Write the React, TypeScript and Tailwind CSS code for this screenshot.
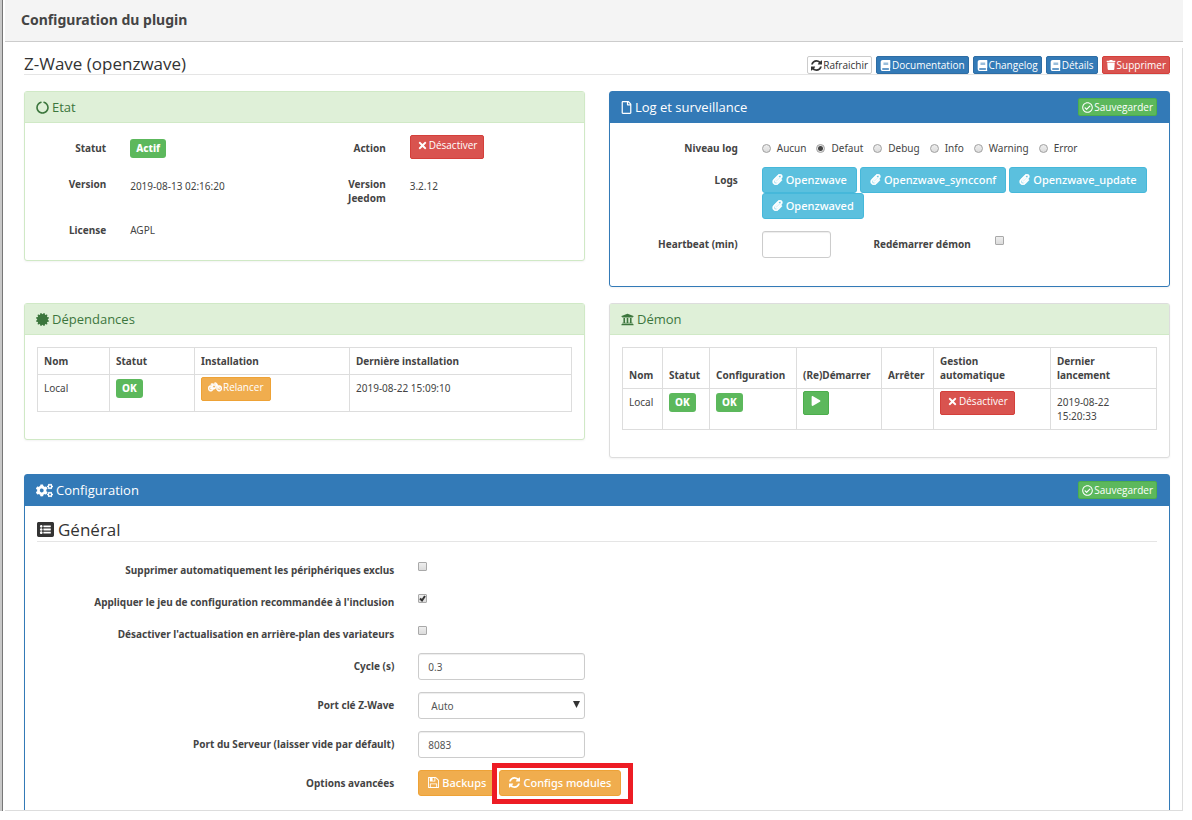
import type { ReactNode } from "react";
import {
  FaBicycle,
  FaBook,
  FaCertificate,
  FaCircleNotch,
  FaCogs,
  FaListAlt,
  FaPaperclip,
  FaPlay,
  FaRegCheckCircle,
  FaRegFile,
  FaTimes,
  FaTrash,
  FaUniversity,
} from "react-icons/fa";

function RefreshIcon({ className }: { className?: string }) {
  return (
    <svg viewBox="128 128 1536 1536" fill="currentColor" className={className} aria-hidden="true">
      <path d="M1639 1056q0 5-1 7-64 268-268 434.5t-478 166.5q-146 0-282.5-55t-243.5-157l-129 129q-19 19-45 19t-45-19-19-45v-448q0-26 19-45t45-19h448q26 0 45 19t19 45-19 45l-137 137q71 66 161 102t187 36q134 0 250-65t186-179q11-17 53-117 8-23 30-23h192q13 0 22.5 9.5t9.5 22.5zm25-800v448q0 26-19 45t-45 19h-448q-26 0-45-19t-19-45 19-45l138-138q-148-137-349-137-134 0-250 65t-186 179q-11 17-53 117-8 23-30 23h-199q-13 0-22.5-9.5t-9.5-22.5v-7q65-268 270-434.5t480-166.5q146 0 284 55.5t245 156.5l130-129q19-19 45-19t45 19 19 45z" />
    </svg>
  );
}

function SaveIcon({ className }: { className?: string }) {
  return (
    <svg viewBox="128 128 1536 1536" fill="currentColor" className={className} aria-hidden="true">
      <path d="M512 1536h768v-384h-768v384zm896 0h128v-896q0-14-10-38.5t-20-34.5l-281-281q-10-10-34-20t-39-10v416q0 40-28 68t-68 28h-576q-40 0-68-28t-28-68v-416h-128v1280h128v-416q0-40 28-68t68-28h832q40 0 68 28t28 68v416zm-384-928v-320q0-13-9.5-22.5t-22.5-9.5h-192q-13 0-22.500 9.500t-9.500 22.500v320q0 13 9.500 22.500t22.500 9.500h192q13 0 22.500-9.500t9.500-22.500zm640 32v928q0 40-28 68t-68 28h-1344q-40 0-68-28t-28-68v-1344q0-40 28-68t68-28h928q40 0 88 20t76 48l280 280q28 28 48 76t20 88z" />
    </svg>
  );
}

const colors = {
  default: "bg-white border-[#ccc] text-[#333]",
  primary: "bg-[#337ab7] border-[#2e6da4] text-white",
  success: "bg-[#5cb85c] border-[#4cae4c] text-white",
  info: "bg-[#5bc0de] border-[#46b8da] text-white",
  warning: "bg-[#f0ad4e] border-[#eea236] text-white",
  danger: "bg-[#d9534f] border-[#d43f3a] text-white",
};

const sizes = {
  xs: "h-[18px] gap-px px-[3px] font-['Open_Sans',sans-serif] text-[10px] rounded-[2px]",
  sm: "h-6 gap-px px-1.5 pb-1 font-['Open_Sans',sans-serif] text-[10px] rounded-[2px]",
  md: "h-[26px] gap-[3px] px-[9px] pb-px text-[11px] rounded-[3px]",
};

interface ButtonProps {
  color: keyof typeof colors;
  size?: keyof typeof sizes;
  label?: string;
  children?: ReactNode;
}

function Button({ color, size = "md", label, children }: ButtonProps) {
  return (
    <button
      type="button"
      aria-label={label}
      className={`inline-flex items-center justify-center whitespace-nowrap border leading-none font-medium ${sizes[size]} ${colors[color]}`}
    >
      {children}
    </button>
  );
}

function Badge({ children }: { children: ReactNode }) {
  return (
    <span className="inline-block h-[19px] rounded-[3px] bg-[#5cb85c] px-1.5 text-[10px] leading-[19px] font-extrabold text-white">
      {children}
    </span>
  );
}

interface PanelProps {
  variant: "success" | "primary";
  border: string;
  icon: ReactNode;
  title: string;
  action?: ReactNode;
  className?: string;
  children: ReactNode;
}

function Panel({ variant, border, icon, title, action, className = "", children }: PanelProps) {
  const heading =
    variant === "success"
      ? "bg-[#dff0d8] text-[#3c763d] border-[#d0e9c6]"
      : "bg-[#337ab7] text-white border-[#337ab7]";
  return (
    <section className={`rounded-[3px] border bg-white shadow-xs ${border} ${className}`}>
      <div className={`flex h-[31px] items-center justify-between border-b pr-3 pl-[11px] ${heading}`}>
        <h2 className="flex items-center gap-[3px] font-['Open_Sans',sans-serif] text-[13px]">
          {icon}
          {title}
        </h2>
        {action}
      </div>
      {children}
    </section>
  );
}

function Label({ htmlFor, className = "", children }: { htmlFor?: string; className?: string; children: ReactNode }) {
  return (
    <label htmlFor={htmlFor} className={`px-3 pt-1.5 text-right font-bold ${className}`}>
      {children}
    </label>
  );
}

function Checkbox({ id, checked = false }: { id: string; checked?: boolean }) {
  return (
    <div className="mt-[5px] grid size-[9px]">
      <input
        id={id}
        type="checkbox"
        defaultChecked={checked}
        className="peer col-start-1 row-start-1 size-[9px] appearance-none rounded-[1px] border border-[#a9a9a9] bg-linear-to-b from-[#eee] to-[#dcdcdc]"
      />
      <svg
        viewBox="0 0 9 9"
        className="pointer-events-none invisible col-start-1 row-start-1 size-[9px] fill-none stroke-[#333] stroke-2 peer-checked:visible"
      >
        <path d="M2 4.5 4 6.5 7 2" />
      </svg>
    </div>
  );
}

function SaveButton() {
  return (
    <Button color="success" size="xs">
      <FaRegCheckCircle className="size-[11px]" />
      Sauvegarder
    </Button>
  );
}

const inputClass =
  "block h-[27px] w-full rounded-[3px] border border-[#ccc] bg-white px-[9px] text-[10px] text-[#555] shadow-[inset_0_1px_1px_rgba(0,0,0,0.075)]";
const th = "border border-[#ddd] px-1.5 py-1.5 text-left align-bottom font-bold";
const td = "border border-[#ddd] px-1.5 align-top";

const levels = ["Aucun", "Defaut", "Debug", "Info", "Warning", "Error"];
const logs = ["Openzwave", "Openzwave_syncconf", "Openzwave_update", "Openzwaved"];

export default function App() {
  return (
    <div className="flex h-screen bg-white pr-[9px] pb-[9px] font-['Noto_Sans','Open_Sans',sans-serif] text-[10px] leading-[14px] text-[#444]">
      <div className="mr-0.5 w-[3px] shrink-0 border-r border-[#777] bg-[#c8c8c8]" />
      <div className="flex min-w-0 flex-1 flex-col border-b border-[#ddd]">
        <header className="flex h-[42px] shrink-0 items-center border-b border-[#ccc] bg-[#f4f4f4] px-4 pb-0.5">
          <h1 className="text-[14px] leading-5 font-bold">Configuration du plugin</h1>
        </header>

        <main className="mt-1.5 min-h-0 flex-1 overflow-hidden border-r border-[#ddd] pr-3 pl-[19px]">
          <div className="flex h-[27px] items-end justify-between border-b border-[#e5e5e5]">
            <h2 className="font-['Open_Sans',sans-serif] text-[17px] leading-[21px] text-[#333]">Z-Wave (openzwave)</h2>
            <div className="flex gap-1">
              <Button color="default" size="xs">
                <RefreshIcon className="size-[11px]" />
                Rafraichir
              </Button>
              <Button color="primary" size="xs">
                <FaBook className="size-[11px]" />
                Documentation
              </Button>
              <Button color="primary" size="xs">
                <FaBook className="size-[11px]" />
                Changelog
              </Button>
              <Button color="primary" size="xs">
                <FaBook className="size-[11px]" />
                Détails
              </Button>
              <Button color="danger" size="xs">
                <FaTrash className="size-[10px]" />
                Supprimer
              </Button>
            </div>
          </div>

          <div className="mt-4 grid grid-cols-2 items-start gap-x-6 gap-y-4">
            <Panel variant="success" border="border-[#d0e9c6]" icon={<FaCircleNotch className="size-[13px]" />} title="Etat">
              <div className="grid grid-cols-12 gap-y-3 pt-3 pb-[23px]">
                <Label className="col-span-2">Statut</Label>
                <div className="col-span-4 px-3 pt-1">
                  <Badge>Actif</Badge>
                </div>
                <Label className="col-span-2">Action</Label>
                <div className="col-span-4 h-6 px-3">
                  <Button color="danger" size="sm">
                    <FaTimes className="size-[11px]" />
                    Désactiver
                  </Button>
                </div>
                <Label className="col-span-2">Version</Label>
                <span className="col-span-4 px-3 pt-2">2019-08-13 02:16:20</span>
                <Label className="col-span-2">Version Jeedom</Label>
                <span className="col-span-4 px-3 pt-2">3.2.12</span>
                <Label className="col-span-2">License</Label>
                <span className="col-span-4 px-3 pt-1.5">AGPL</span>
              </div>
            </Panel>

            <Panel
              variant="primary"
              border="border-[#337ab7]"
              icon={<FaRegFile className="h-[13px] w-[11px]" />}
              title="Log et surveillance"
              action={<SaveButton />}
            >
              <div className="grid grid-cols-12 gap-y-3 pt-3 pb-7">
                <Label className="col-span-3">Niveau log</Label>
                <div className="col-span-9 flex gap-2.5 px-3 pt-1.5">
                  {levels.map((level) => (
                    <label key={level} className="flex items-center gap-1.5">
                      <input
                        type="radio"
                        name="level"
                        defaultChecked={level === "Defaut"}
                        className="size-[9px] appearance-none rounded-full border border-[#a0a0a0] bg-linear-to-b from-[#eee] to-[#dcdcdc] checked:bg-[radial-gradient(circle,#444_2px,#e4e4e4_3px)]"
                      />
                      {level}
                    </label>
                  ))}
                </div>
                <Label className="col-span-3">Logs</Label>
                <div className="col-span-9 flex flex-wrap gap-x-[3px] px-3">
                  {logs.map((log) => (
                    <Button key={log} color="info">
                      <FaPaperclip className="size-[11px] stroke-current stroke-[30]" />
                      {log}
                    </Button>
                  ))}
                </div>
                <Label htmlFor="heartbeat" className="col-span-3">
                  Heartbeat (min)
                </Label>
                <div className="col-span-2 px-3">
                  <input id="heartbeat" type="text" className={inputClass} />
                </div>
                <Label htmlFor="restart" className="col-span-3">
                  Redémarrer démon
                </Label>
                <div className="col-span-4 px-3">
                  <Checkbox id="restart" />
                </div>
              </div>
            </Panel>

            <Panel
              variant="success"
              border="border-[#d0e9c6]"
              icon={<FaCertificate className="size-[13px]" />}
              title="Dépendances"
            >
              <div className="px-3 pt-3 pb-[27px]">
                <table className="w-full border-collapse">
                  <thead>
                    <tr>
                      <th className={`${th} w-[72px]`}>Nom</th>
                      <th className={`${th} w-[85px]`}>Statut</th>
                      <th className={`${th} w-[155px]`}>Installation</th>
                      <th className={th}>Dernière installation</th>
                    </tr>
                  </thead>
                  <tbody>
                    <tr className="h-[37px]">
                      <td className={`${td} pt-1.5`}>Local</td>
                      <td className={`${td} pt-1`}>
                        <Badge>OK</Badge>
                      </td>
                      <td className={`${td} pt-0.5`}>
                        <Button color="warning" size="sm">
                          <FaBicycle className="size-[14px] stroke-current stroke-[30]" />
                          Relancer
                        </Button>
                      </td>
                      <td className={`${td} pt-1.5`}>2019-08-22 15:09:10</td>
                    </tr>
                  </tbody>
                </table>
              </div>
            </Panel>

            <Panel variant="success" border="border-[#ddd]" icon={<FaUniversity className="size-[13px]" />} title="Démon">
              <div className="px-3 pt-3 pb-[27px]">
                <table className="w-full border-collapse">
                  <thead>
                    <tr>
                      <th className={`${th} w-[40px]`}>Nom</th>
                      <th className={`${th} w-[47px]`}>Statut</th>
                      <th className={`${th} w-[87px]`}>Configuration</th>
                      <th className={`${th} w-[85px]`}>(Re)Démarrer</th>
                      <th className={`${th} w-[52px]`}>Arrêter</th>
                      <th className={`${th} w-[117px]`}>
                        Gestion
                        <br />
                        automatique
                      </th>
                      <th className={th}>
                        Dernier
                        <br />
                        lancement
                      </th>
                    </tr>
                  </thead>
                  <tbody>
                    <tr>
                      <td className={`${td} pt-1.5`}>Local</td>
                      <td className={`${td} pt-1`}>
                        <Badge>OK</Badge>
                      </td>
                      <td className={`${td} pt-1`}>
                        <Badge>OK</Badge>
                      </td>
                      <td className={`${td} pt-0.5`}>
                        <Button color="success" size="sm" label="Démarrer">
                          <FaPlay className="h-[10px] w-3" />
                        </Button>
                      </td>
                      <td className={td}></td>
                      <td className={`${td} pt-0.5`}>
                        <Button color="danger" size="sm">
                          <FaTimes className="size-[11px]" />
                          Désactiver
                        </Button>
                      </td>
                      <td className={`${td} py-1.5`}>
                        2019-08-22
                        <br />
                        15:20:33
                      </td>
                    </tr>
                  </tbody>
                </table>
              </div>
            </Panel>

            <Panel
              variant="primary"
              border="border-[#337ab7]"
              icon={<FaCogs className="size-[17px]" />}
              title="Configuration"
              action={<SaveButton />}
              className="col-span-2"
            >
              <div className="mx-3 mt-3 flex h-6 items-center gap-1 border-b border-[#e5e5e5] font-['Open_Sans',sans-serif] text-[17px] text-[#333]">
                <FaListAlt className="size-[17px]" />
                <h3>Général</h3>
              </div>
              <div className="mt-[15px] grid grid-cols-12 gap-y-3 pb-16">
                <Label htmlFor="autoremove" className="col-span-4">
                  Supprimer automatiquement les périphériques exclus
                </Label>
                <div className="col-span-8 px-3">
                  <Checkbox id="autoremove" />
                </div>
                <Label htmlFor="recommended" className="col-span-4">
                  Appliquer le jeu de configuration recommandée à l'inclusion
                </Label>
                <div className="col-span-8 px-3">
                  <Checkbox id="recommended" checked />
                </div>
                <Label htmlFor="background" className="col-span-4">
                  Désactiver l'actualisation en arrière-plan des variateurs
                </Label>
                <div className="col-span-8 px-3">
                  <Checkbox id="background" />
                </div>
                <Label htmlFor="cycle" className="col-span-4">
                  Cycle (s)
                </Label>
                <div className="col-span-2 px-3">
                  <input id="cycle" type="text" defaultValue="0.3" className={inputClass} />
                </div>
                <Label htmlFor="port" className="col-span-4 col-start-1">
                  Port clé Z-Wave
                </Label>
                <div className="relative col-span-2 px-3">
                  <select id="port" className={`${inputClass} appearance-none pl-3`}>
                    <option>Auto</option>
                  </select>
                  <svg viewBox="0 0 7 7" className="pointer-events-none absolute top-[9px] right-[17px] size-[7px] fill-[#333]">
                    <path d="M0 0h7L3.5 7z" />
                  </svg>
                </div>
                <Label htmlFor="server" className="col-span-4 col-start-1">
                  Port du Serveur (laisser vide par défault)
                </Label>
                <div className="col-span-2 px-3">
                  <input id="server" type="text" defaultValue="8083" className={inputClass} />
                </div>
                <Label className="col-span-4 col-start-1">Options avancées</Label>
                <div className="col-span-8 flex gap-[3px] px-3">
                  <Button color="warning">
                    <SaveIcon className="size-[11px]" />
                    Backups
                  </Button>
                  <div className="relative">
                    <Button color="warning">
                      <RefreshIcon className="size-[11px]" />
                      Configs modules
                    </Button>
                    <div className="pointer-events-none absolute -top-[7px] -right-3 -bottom-2 -left-[7px] border-[5px] border-[#ed1c24]" />
                  </div>
                </div>
              </div>
            </Panel>
          </div>
        </main>
      </div>
    </div>
  );
}
